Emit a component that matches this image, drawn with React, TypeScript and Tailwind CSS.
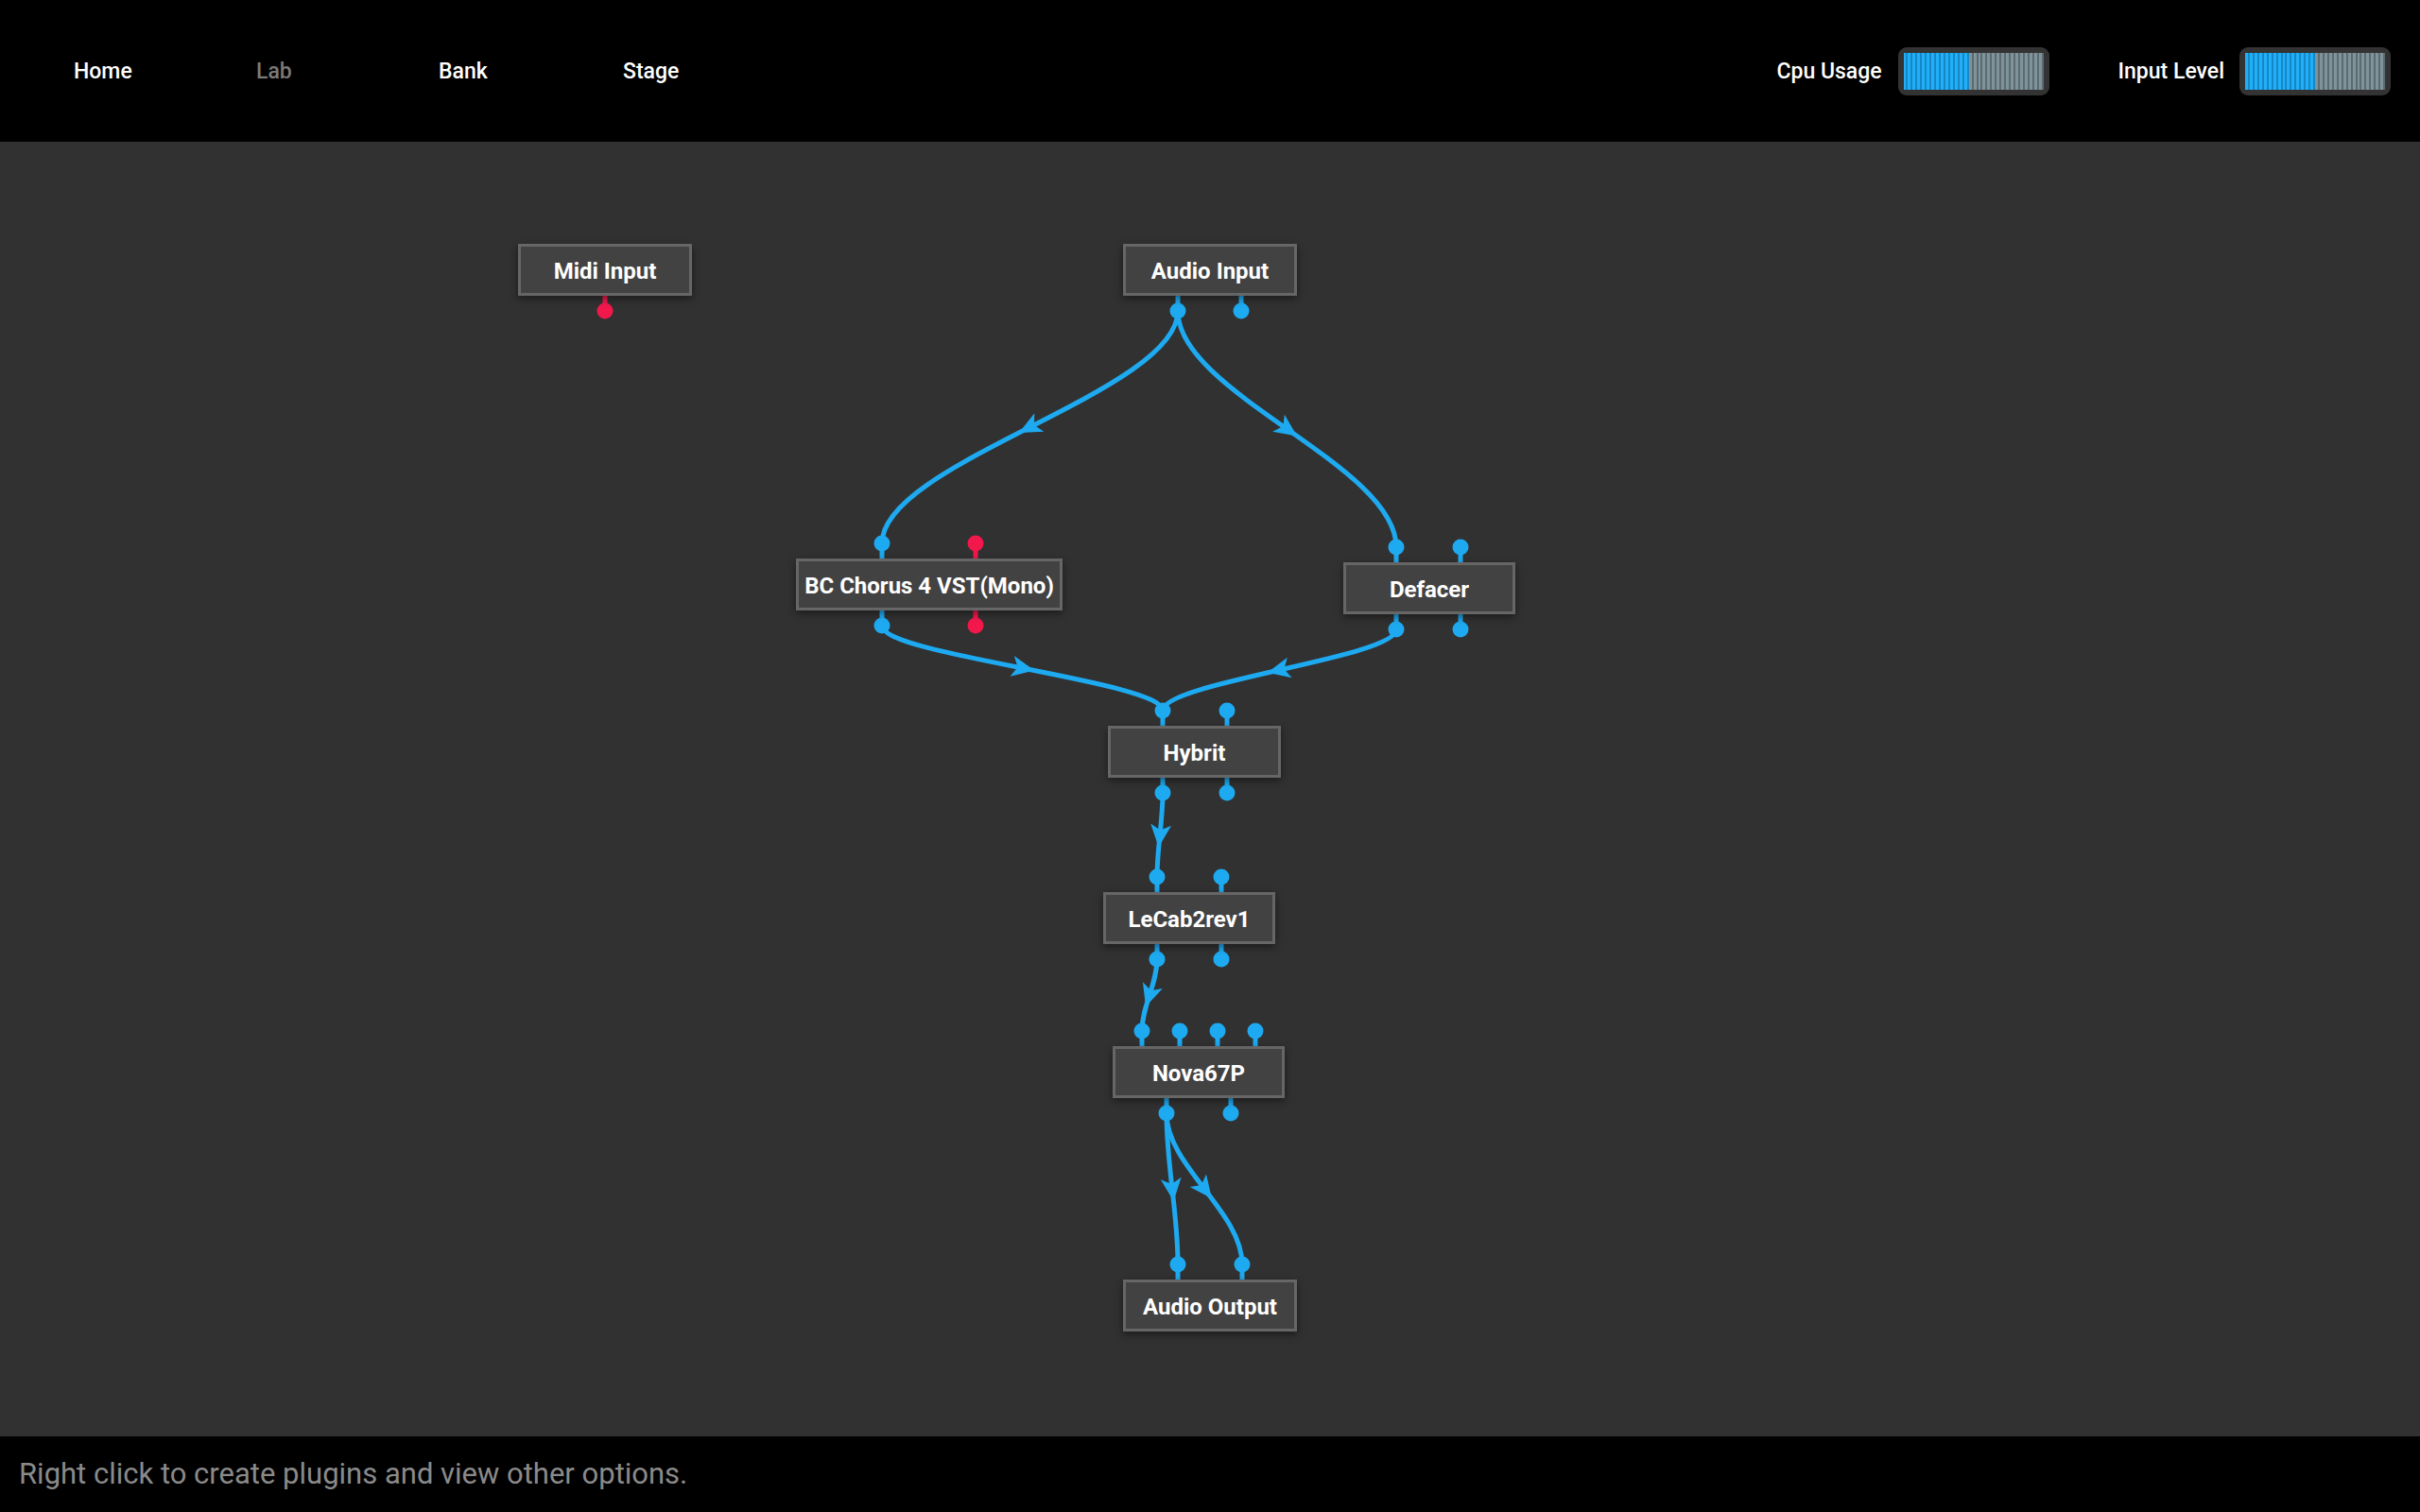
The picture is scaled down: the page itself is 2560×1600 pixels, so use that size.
import React from 'react';

type Port = { dx: number; red?: boolean };
type GraphNode = { id: string; label: string; x: number; y: number; w: number; ins: Port[]; outs: Port[] };

const NODE_H = 55;
const TOP = 150;
const BLUE = '#1eaaf1';
const RED = '#f2184b';

const nodes: GraphNode[] = [
  { id: 'midi', label: 'Midi Input', x: 548, y: 258, w: 184, ins: [], outs: [{ dx: 92, red: true }] },
  { id: 'ain', label: 'Audio Input', x: 1188, y: 258, w: 184, ins: [], outs: [{ dx: 58 }, { dx: 125 }] },
  {
    id: 'chorus', label: 'BC Chorus 4 VST(Mono)', x: 842, y: 591, w: 282,
    ins: [{ dx: 91 }, { dx: 190, red: true }], outs: [{ dx: 91 }, { dx: 190, red: true }],
  },
  { id: 'defacer', label: 'Defacer', x: 1421, y: 595, w: 182, ins: [{ dx: 56 }, { dx: 124 }], outs: [{ dx: 56 }, { dx: 124 }] },
  { id: 'hybrit', label: 'Hybrit', x: 1172, y: 768, w: 183, ins: [{ dx: 58 }, { dx: 126 }], outs: [{ dx: 58 }, { dx: 126 }] },
  { id: 'lecab', label: 'LeCab2rev1', x: 1167, y: 944, w: 182, ins: [{ dx: 57 }, { dx: 125 }], outs: [{ dx: 57 }, { dx: 125 }] },
  {
    id: 'nova', label: 'Nova67P', x: 1177, y: 1107, w: 182,
    ins: [{ dx: 31 }, { dx: 71 }, { dx: 111 }, { dx: 151 }], outs: [{ dx: 57 }, { dx: 125 }],
  },
  { id: 'aout', label: 'Audio Output', x: 1188, y: 1354, w: 184, ins: [{ dx: 58 }, { dx: 126 }], outs: [] },
];

const edges: [string, number, string, number][] = [
  ['ain', 0, 'chorus', 0],
  ['ain', 0, 'defacer', 0],
  ['chorus', 0, 'hybrit', 0],
  ['defacer', 0, 'hybrit', 0],
  ['hybrit', 0, 'lecab', 0],
  ['lecab', 0, 'nova', 0],
  ['nova', 0, 'aout', 0],
  ['nova', 0, 'aout', 1],
];

const byId = (id: string) => nodes.find((n) => n.id === id)!;
const outPos = (n: GraphNode, i: number) => ({ x: n.x + n.outs[i].dx, y: n.y + NODE_H + 16 - TOP });
const inPos = (n: GraphNode, i: number) => ({ x: n.x + n.ins[i].dx, y: n.y - 16 - TOP });

function Edge({ from }: { from: [string, number, string, number] }) {
  const a = outPos(byId(from[0]), from[1]);
  const b = inPos(byId(from[2]), from[3]);
  const d = Math.max((b.y - a.y) * 0.35, 20);
  const p1 = { x: a.x, y: a.y + d };
  const p2 = { x: b.x, y: b.y - d };
  const mx = (a.x + 3 * p1.x + 3 * p2.x + b.x) / 8;
  const my = (a.y + 3 * p1.y + 3 * p2.y + b.y) / 8;
  const tx = 0.75 * (p1.x - a.x) + 1.5 * (p2.x - p1.x) + 0.75 * (b.x - p2.x);
  const ty = 0.75 * (p1.y - a.y) + 1.5 * (p2.y - p1.y) + 0.75 * (b.y - p2.y);
  const ang = (Math.atan2(ty, tx) * 180) / Math.PI;
  return (
    <g>
      <path
        d={`M${a.x} ${a.y} C${p1.x} ${p1.y} ${p2.x} ${p2.y} ${b.x} ${b.y}`}
        fill="none"
        stroke={BLUE}
        strokeWidth={5}
      />
      <polygon points="13,0 -11,-11 -5,0 -11,11" fill={BLUE} transform={`translate(${mx} ${my}) rotate(${ang})`} />
    </g>
  );
}

function Ports({ n }: { n: GraphNode }) {
  const top = n.y - TOP;
  const bottom = top + NODE_H;
  return (
    <g>
      {n.ins.map((p, i) => (
        <g key={`i${i}`}>
          <line x1={n.x + p.dx} y1={top - 16} x2={n.x + p.dx} y2={top + 2} stroke={p.red ? RED : BLUE} strokeWidth={5} />
          <circle cx={n.x + p.dx} cy={top - 16} r={8.5} fill={p.red ? RED : BLUE} />
        </g>
      ))}
      {n.outs.map((p, i) => (
        <g key={`o${i}`}>
          <line x1={n.x + p.dx} y1={bottom - 2} x2={n.x + p.dx} y2={bottom + 16} stroke={p.red ? RED : BLUE} strokeWidth={5} />
          <circle cx={n.x + p.dx} cy={bottom + 16} r={8.5} fill={p.red ? RED : BLUE} />
        </g>
      ))}
    </g>
  );
}

function Meter({ filled }: { filled: number }) {
  return (
    <div className="w-[160px] h-[51px] rounded-[9px] bg-[#333333] p-[6px]">
      <div className="flex h-full">
        {Array.from({ length: 30 }).map((_, i) => (
          <div
            key={i}
            className={
              i < filled
                ? 'flex-1 bg-[#20b0f8] border-r-2 border-[#1686c6]'
                : 'flex-1 bg-[#7e939a] border-r-2 border-[#5b6b71]'
            }
          />
        ))}
      </div>
    </div>
  );
}

export default function App() {
  return (
    <div className="w-[2560px] h-[1600px] flex flex-col bg-[#313131] font-['Roboto',sans-serif] overflow-hidden">
      <header className="h-[150px] shrink-0 bg-black flex items-center justify-between">
        <nav className="flex pl-[78px] pt-[3px] text-[23px] font-medium">
          <span className="w-[193px] text-white">Home</span>
          <span className="w-[193px] text-[#7a7a7a]">Lab</span>
          <span className="w-[195px] text-white">Bank</span>
          <span className="w-[193px] text-white">Stage</span>
        </nav>
        <div className="flex items-center pr-[31px] text-[23px] font-medium text-white">
          <span className="mr-[17px] pt-[3px]">Cpu Usage</span>
          <Meter filled={14} />
          <span className="ml-[73px] mr-[16px] pt-[3px]">Input Level</span>
          <Meter filled={15} />
        </div>
      </header>

      <main className="relative flex-1">
        <svg className="absolute inset-0" width={2560} height={1370} viewBox="0 0 2560 1370">
          {edges.map((e, i) => (
            <Edge key={i} from={e} />
          ))}
          {nodes.map((n) => (
            <Ports key={n.id} n={n} />
          ))}
        </svg>
        {nodes.map((n) => (
          <div
            key={n.id}
            className="absolute flex items-center justify-center pt-[3px] bg-[#424242] border-[3px] border-[#666666] shadow-[0_3px_8px_rgba(0,0,0,0.45)] text-white font-bold text-[24px] whitespace-nowrap"
            style={{ left: n.x, top: n.y - TOP, width: n.w, height: NODE_H }}
          >
            {n.label}
          </div>
        ))}
      </main>

      <footer className="h-[80px] shrink-0 bg-black flex items-center pl-[20px]">
        <span className="text-[31px] text-[#8a8a8a]">Right click to create plugins and view other options.</span>
      </footer>
    </div>
  );
}
